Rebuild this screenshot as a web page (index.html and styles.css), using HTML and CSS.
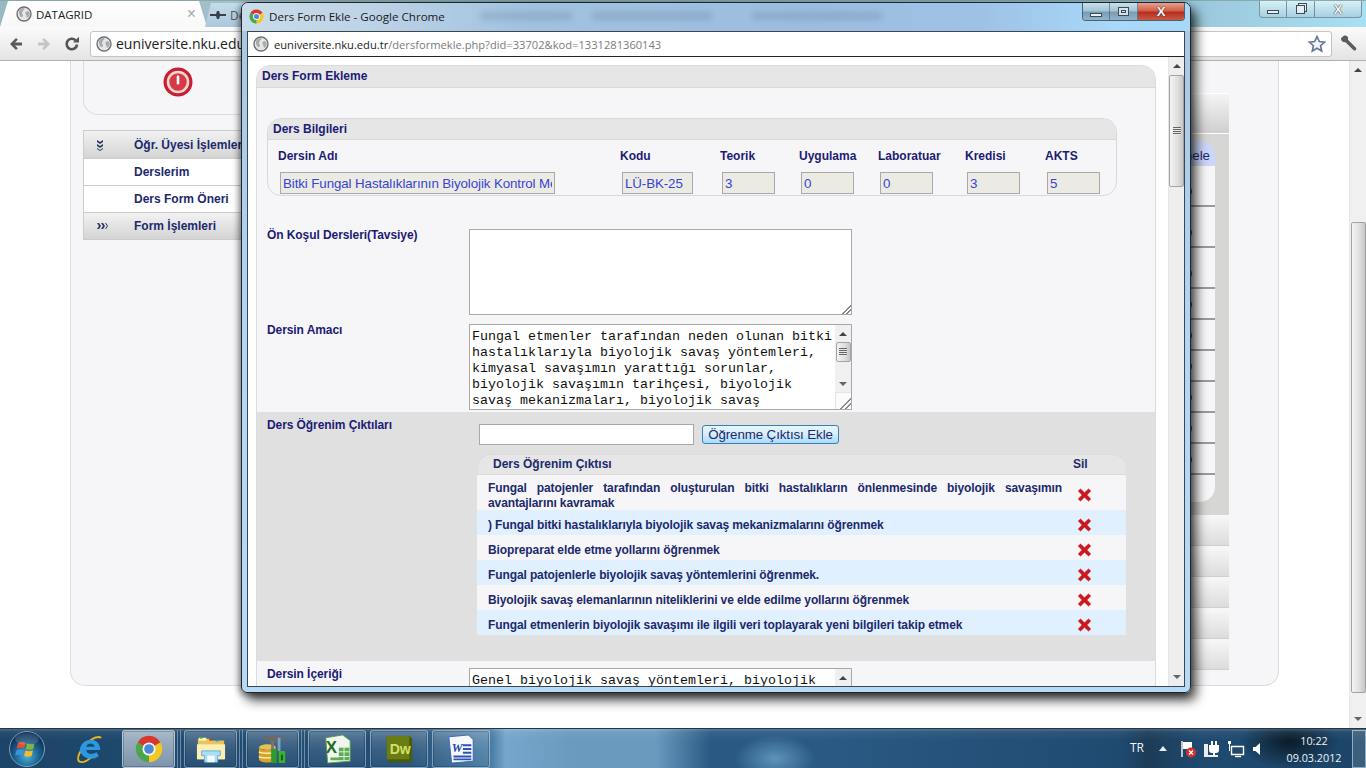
FILE: index.html
```html
<!DOCTYPE html>
<html lang="tr">
<head>
<meta charset="utf-8">
<title>Ders Form Ekle</title>
<link rel="stylesheet" href="styles.css">
</head>
<body>
<svg class="defs" width="0" height="0" aria-hidden="true">
  <defs>
    <symbol id="globe" viewBox="0 0 16 16">
      <circle cx="8" cy="8" r="7" fill="#e4e6e8" stroke="#6e7072" stroke-width="1.4"/>
      <path d="M3 5c1-2 3-3 5-3 1 1 0 2-1 2.500 0 1-1 1.500-1 2.500s1 1.500 1 2.500-1 2-2 1.500C3.500 10 2.500 7 3 5zM9.500 6c1.500-1 3-1 4 0 .5 2 0 4-1.500 5.500-1 .5-1.500-.5-1.500-1.500S9 8 9.500 6z" fill="#a8aaac"/>
    </symbol>
    <symbol id="chrome" viewBox="0 0 32 32">
      <path d="M16 16 3 8.500A15 15 0 0 1 29 8.500z" fill="#d8382c"/>
      <path d="M16 16 29 8.500A15 15 0 0 1 16 31z" fill="#f6c91e"/>
      <path d="M16 16 16 31A15 15 0 0 1 3 8.500z" fill="#4ba64a"/>
      <circle cx="16" cy="16" r="7.500" fill="#f4f4f4"/>
      <circle cx="16" cy="16" r="5.500" fill="#4a8ad8"/>
    </symbol>
    <symbol id="xmark" viewBox="0 0 15 14">
      <path d="M1 3 3.500 .8 7.500 4.500 11.500 .8 14 3 10.200 7 14 11 11.500 13.300 7.500 9.500 3.500 13.300 1 11 4.800 7z" fill="#c9191c" stroke="#e86060" stroke-width=".5"/>
    </symbol>
  </defs>
</svg>

<header class="chrome">
  <div class="tabstrip">
    <div class="tab tab-active">
      <svg class="ico16"><use href="#globe"/></svg>
      <span class="tab-title">DATAGRID</span>
      <span class="tab-close">×</span>
    </div>
    <div class="tab tab-idle">
      <svg class="ico-plane" viewBox="0 0 16 10"><path d="M0 4h6l1-3h2l1 3h6v2h-6l-1 3H7L6 6H0z" fill="#3a4048"/></svg>
      <span class="tab-title tab-title-dim">De</span>
    </div>
    <div class="winbtns winbtns-outer">
      <span class="wb wb-min"><i class="g-min"></i></span>
      <span class="wb wb-max"><i class="g-restore"></i></span>
      <span class="wb wb-close-light"><b class="g-x">X</b></span>
    </div>
  </div>
  <div class="toolbar">
    <svg class="nav" viewBox="0 0 16 16"><path d="M8 2 2 8l6 6 1.800-1.800L7 9.500h7v-3H7l2.800-2.700z" fill="#5a5a5a"/></svg>
    <svg class="nav" viewBox="0 0 16 16"><path d="M8 2l6 6-6 6-1.800-1.800L9 9.500H2v-3h7L6.200 3.800z" fill="#c4c4c4"/></svg>
    <svg class="nav" viewBox="0 0 16 16"><path d="M13 8.500A5.200 5.200 0 1 1 11.500 4.300" fill="none" stroke="#555" stroke-width="2.600"/><path d="M9 6.500h6V.8z" fill="#555"/></svg>
    <div class="omnibox">
      <svg class="ico16"><use href="#globe"/></svg>
      <span class="omni-text">euniversite.nku.edu</span>
      <svg class="star" viewBox="0 0 18 18"><path d="M9 1.500l2.300 5 5.300.6-4 3.600 1.100 5.400L9 13.300l-4.700 2.800 1.100-5.400-4-3.600 5.300-.6z" fill="#f4f6fa" stroke="#67789a" stroke-width="1.700"/></svg>
    </div>
    <svg class="wrench" viewBox="0 0 18 18"><path d="M1 3.500 4 .8c2-.6 4 .3 4.500 2.200.2.800.1 1.400-.1 2l8.300 8.300c.8.900.8 1.900 0 2.600s-1.800.8-2.600 0L5.800 7.600C3.500 8 1 6.500 1 3.500z" fill="#5c5c5c"/></svg>
  </div>
</header>

<div class="viewport">
  <main class="bgpage">
    <div class="bgpanel">
      <div class="bg-left">
        <div class="logout-box">
          <svg class="power" viewBox="0 0 30 30"><circle cx="15" cy="15" r="14.500" fill="#c4202e"/><circle cx="15" cy="15" r="10" fill="#d63a44" stroke="#f6d4d6" stroke-width="2.600"/><rect x="13.700" y="8.500" width="2.600" height="9" rx="1" fill="#fff"/></svg>
        </div>
        <nav class="menu">
          <div class="menu-row menu-head menu-first">
            <svg class="chev" viewBox="0 0 8 12"><path d="M1 1l3 2 3-2v2L4 5 1 3zM1 5l3 2 3-2v2L4 9 1 7zM1 9l3 2 3-2v1l-3 2-3-2z" fill="#28355e"/></svg>
            <span>Öğr. Üyesi İşlemleri</span>
          </div>
          <div class="menu-row"><span class="menu-nochev">Derslerim</span></div>
          <div class="menu-row"><span class="menu-nochev">Ders Form Öneri</span></div>
          <div class="menu-row menu-head menu-end">
            <svg class="chev chev-r" viewBox="0 0 12 8"><path d="M1 1l2 3-2 3h2l2-3-2-3zM5 1l2 3-2 3h2l2-3-2-3zM9 1l2 3-2 3h1l2-3-2-3z" fill="#28355e"/></svg>
            <span>Form İşlemleri</span>
          </div>
        </nav>
      </div>
      <div class="bg-right">
        <div class="bg-strip">
          <div class="bg-strip-head"></div>
          <div class="bg-table">
            <div class="bg-th">Müdahele</div>
            <div class="bg-tr bg-tall"><i class="dot"></i></div>
            <div class="bg-tr bg-tall"><i class="dot"></i></div>
            <div class="bg-tr bg-tall"><i class="dot"></i></div>
            <div class="bg-tr"><i class="dot"></i></div>
            <div class="bg-tr"><i class="dot"></i></div>
            <div class="bg-tr"><i class="dot"></i></div>
            <div class="bg-tr"><i class="dot"></i></div>
            <div class="bg-tr"><i class="dot"></i></div>
            <div class="bg-tr"><i class="dot"></i></div>
            <div class="bg-tr bg-last"></div>
          </div>
        </div>
        <div class="bg-btn"></div>
        <div class="bg-btn"></div>
        <div class="bg-btn"></div>
        <div class="bg-btn"></div>
        <div class="bg-btn"></div>
      </div>
    </div>
  </main>
  <div class="vbar page-bar">
    <span class="arrow arrow-up"></span>
    <span class="thumb page-thumb"></span>
    <span class="arrow arrow-down"></span>
  </div>
</div>

<footer class="taskbar">
  <svg class="orb" viewBox="0 0 36 36">
    <defs>
      <radialGradient id="orbfill" cx="50%" cy="70%" r="62%"><stop offset="0" stop-color="#46b4d8"/><stop offset=".6" stop-color="#1a5c8c"/><stop offset="1" stop-color="#0c2c50"/></radialGradient>
    </defs>
    <circle cx="18" cy="18" r="17.500" fill="url(#orbfill)" stroke="#7ea0bc"/>
    <path d="M9 12c3-1.500 5-1 7.500 0l-1.300 5.500c-2.500-1-4.700-1-7.500 0z" fill="#e4502c"/>
    <path d="M18 12.500c2.500 1 5 1.300 7.500 0l-1.300 5.500c-2.500 1-5 1-7.500 0z" fill="#80b83c"/>
    <path d="M7.500 19c2.800-1 5-1 7.300 0l-1.300 5.500c-2.500-1-4.700-1-7.300 0z" fill="#3a92d8"/>
    <path d="M16.400 19.500c2.500 1 5 1 7.500 0l-1.300 5.500c-2.500 1-5 1-7.500 0z" fill="#f4bc2c"/>
    <ellipse cx="18" cy="8" rx="12" ry="6" fill="#fff" opacity=".14"/>
  </svg>
  <div class="tb-ie">
    <svg class="ie" viewBox="0 0 32 32">
      <path d="M28 4C22 1 12 8 5 20c-3 6-2 10 2 10 3 0 7-2 10-5" fill="none" stroke="#e8b420" stroke-width="2"/>
      <path d="M5 17C6 10 11 6 17 6c6 0 10 5 10 11H12c.5 4 5 6 11 2.500l2.500 4C21 28 8 28 5 17zM12 13.500h9C20 9 13 9 12 13.500z" fill="#2c98e0"/>
    </svg>
  </div>
  <div class="tb-btn tb-active tb-w53">
    <svg class="tb-ico tb-ico28"><use href="#chrome"/></svg>
  </div>
  <i class="tb-sep"></i>
  <div class="tb-btn tb-w53">
    <svg class="tb-ico" viewBox="0 0 32 32">
      <path d="M2 5h12l2 2h14v20H2z" fill="#e8c45a"/>
      <path d="M3 4h8v3H3z" fill="#fff6c8"/>
      <rect x="4" y="3" width="3" height="2" fill="#38b838"/><rect x="14" y="5" width="3" height="2" fill="#d83828"/><rect x="21" y="6" width="3" height="2" fill="#3888d8"/>
      <path d="M1 11h30v16H1z" fill="#fbefb4"/>
      <path d="M6 18h20v5h-3v7H9v-7H6z" fill="#a8def8" stroke="#64b0dc"/>
      <rect x="12" y="23" width="8" height="7" fill="#f2f8fc"/>
    </svg>
  </div>
  <i class="tb-sep"></i>
  <div class="tb-btn tb-w53">
    <svg class="tb-ico" viewBox="0 0 32 32">
      <ellipse cx="10" cy="14" rx="9" ry="3" fill="#e8c050"/>
      <path d="M1 14v13c0 2 4 3.500 9 3.500s9-1.500 9-3.500V14c-1 2-4 3-9 3s-8-1-9-3z" fill="#d8a428"/>
      <path d="M1 19c2 2 16 2 18 0M1 24c2 2 16 2 18 0" stroke="#fff2b4" stroke-width="1.400" fill="none"/>
      <path d="M6 2h16c4 0 7 3 8 7l-3-3h-6v3h-9V6H6z" fill="#6a6a6a"/>
      <rect x="14" y="8" width="3" height="8" fill="#777"/>
      <rect x="21" y="4" width="3" height="14" fill="#78a0d0"/>
      <rect x="14" y="16" width="6" height="15" rx="1" fill="#2c9c30"/>
      <rect x="22" y="18" width="7" height="13" rx="1" fill="#38b030"/>
      <rect x="24.500" y="22" width="2" height="6" fill="#0c5c14"/>
    </svg>
  </div>
  <i class="tb-sep"></i>
  <div class="tb-btn tb-w58">
    <svg class="tb-ico tb-ico30" viewBox="0 0 32 32">
      <path d="M4 4 22 1l8 6v22L6 31z" fill="#f0f6ec" stroke="#5c9a52"/>
      <path d="M18 14h11v14H9v-3h9z" fill="#5eab58"/>
      <path d="M18 14h11M18 19h11M18 24h11M23.500 14v14" stroke="#e8f4e4"/>
      <text class="xl" x="4" y="20">X</text>
    </svg>
  </div>
  <div class="tb-btn tb-w58 tb-gap">
    <svg class="tb-ico tb-ico30" viewBox="0 0 32 32">
      <path d="M3 2h24l3 3v25H6l-3-3z" fill="#4a5a0c"/>
      <path d="M3 2h24v25H3z" fill="#6a7c14"/>
      <text class="dw" x="6" y="21">Dw</text>
    </svg>
  </div>
  <div class="tb-btn tb-w58 tb-gap">
    <svg class="tb-ico tb-ico30" viewBox="0 0 32 32">
      <path d="M3 3 24 1l5 5v23L6 31z" fill="#f6f8fc" stroke="#3c64b8"/>
      <path d="M18 12h9M18 16h9M18 20h9M8 24h19M8 27h19" stroke="#2c54b0" stroke-width="2"/>
      <text class="wd" x="6" y="19">W</text>
    </svg>
  </div>
  <div class="tray">
    <span class="tray-lang">TR</span>
    <svg class="tray-arrow" viewBox="0 0 8 5"><path d="M0 5l4-5 4 5z" fill="#e8eef4"/></svg>
    <svg class="tray-ico" viewBox="0 0 18 18"><path d="M3 1v16" stroke="#fff" stroke-width="1.400"/><path d="M4 2h9v7H4z" fill="#fff"/><circle cx="12" cy="12.500" r="5" fill="#d8302c"/><path d="M10 10.500l4 4M14 10.500l-4 4" stroke="#fff" stroke-width="1.400"/></svg>
    <svg class="tray-ico" viewBox="0 0 18 18"><path d="M1 4h4v11h10v2H1z" fill="#fff" opacity=".9"/><path d="M8 1h2v4h2V1h2v4h2v5a3 3 0 0 1-3 3h-1v3h-2v-3H9a3 3 0 0 1-3-3V5h2z" fill="#fff"/></svg>
    <svg class="tray-ico" viewBox="0 0 18 18"><path d="M1 1h3v3H1z" fill="#fff"/><path d="M2.500 4v7" stroke="#fff"/><path d="M4.500 6.500h12v8h-12z" fill="none" stroke="#fff" stroke-width="1.400"/><path d="M8 16.500h6" stroke="#fff" stroke-width="1.400"/></svg>
    <svg class="tray-ico tray-speaker" viewBox="0 0 18 18"><path d="M2 7h2.500L9 3v12l-4.500-4H2z" fill="#fff"/></svg>
    <div class="clock"><span>10:22</span><span>09.03.2012</span></div>
    <i class="show-desktop"></i>
  </div>
</footer>

<section class="popup">
  <div class="titlebar">
    <i class="smudge smudge-a"></i><i class="smudge smudge-b"></i><i class="smudge smudge-c"></i>
    <svg class="ico-chrome"><use href="#chrome"/></svg>
    <span class="win-title">Ders Form Ekle - Google Chrome</span>
    <div class="winbtns">
      <span class="wb wb-min wb-glass"><i class="g-min"></i></span>
      <span class="wb wb-max wb-glass"><i class="g-max"></i></span>
      <span class="wb wb-close"><b class="g-x">X</b></span>
    </div>
  </div>
  <div class="win-body">
    <div class="addr">
      <svg class="ico16"><use href="#globe"/></svg>
      <span class="addr-text">euniversite.nku.edu.tr<span class="addr-dim">/dersformekle.php?did=33702&amp;kod=1331281360143</span></span>
    </div>
    <div class="win-content">
      <div class="doc">
        <div class="panel">
          <h1 class="panel-title">Ders Form Ekleme</h1>
          <div class="info-box">
            <h2 class="info-title">Ders Bilgileri</h2>
            <div class="info-grid">
              <span class="th">Dersin Adı</span><span class="th">Kodu</span><span class="th">Teorik</span><span class="th">Uygulama</span><span class="th">Laboratuar</span><span class="th">Kredisi</span><span class="th">AKTS</span>
              <input class="ro ro-name" readonly value="Bitki Fungal Hastalıklarının Biyolojik Kontrol Metotları">
              <input class="ro ro-code" readonly value="LÜ-BK-25">
              <input class="ro" readonly value="3">
              <input class="ro" readonly value="0">
              <input class="ro" readonly value="0">
              <input class="ro" readonly value="3">
              <input class="ro" readonly value="5">
            </div>
          </div>

          <div class="form-row row-first">
            <label class="lbl">Ön Koşul Dersleri(Tavsiye)</label>
            <div class="ta-wrap">
              <textarea class="ta" readonly></textarea>
              <i class="grip"></i>
            </div>
          </div>

          <div class="form-row row-second">
            <label class="lbl">Dersin Amacı</label>
            <div class="ta-wrap">
              <textarea class="ta" readonly>Fungal etmenler tarafından neden olunan bitki
hastalıklarıyla biyolojik savaş yöntemleri,
kimyasal savaşımın yarattığı sorunlar,
biyolojik savaşımın tarihçesi, biyolojik
savaş mekanizmaları, biyolojik savaş</textarea>
              <div class="ta-bar">
                <span class="arrow arrow-up arrow-sm"></span>
                <span class="thumb ta-thumb"></span>
                <span class="arrow arrow-down arrow-sm"></span>
              </div>
              <i class="grip grip-box"></i>
            </div>
          </div>

          <div class="out-row">
            <label class="lbl lbl-out">Ders Öğrenim Çıktıları</label>
            <div class="out-main">
              <div class="out-add">
                <input class="out-input">
                <button class="out-btn" type="button">Öğrenme Çıktısı Ekle</button>
              </div>
              <div class="out-table">
                <div class="out-head"><span class="out-h1">Ders Öğrenim Çıktısı</span><span>Sil</span></div>
                <div class="out-tr out-tall"><span class="out-text">Fungal patojenler tarafından oluşturulan bitki hastalıkların önlenmesinde biyolojik savaşımın avantajlarını kavramak</span><svg class="out-x"><use href="#xmark"/></svg></div>
                <div class="out-tr out-alt"><span class="out-text">) Fungal bitki hastalıklarıyla biyolojik savaş mekanizmalarını öğrenmek</span><svg class="out-x"><use href="#xmark"/></svg></div>
                <div class="out-tr"><span class="out-text">Biopreparat elde etme yollarını öğrenmek</span><svg class="out-x"><use href="#xmark"/></svg></div>
                <div class="out-tr out-alt"><span class="out-text">Fungal patojenlerle biyolojik savaş yöntemlerini öğrenmek.</span><svg class="out-x"><use href="#xmark"/></svg></div>
                <div class="out-tr"><span class="out-text">Biyolojik savaş elemanlarının niteliklerini ve elde edilme yollarını öğrenmek</span><svg class="out-x"><use href="#xmark"/></svg></div>
                <div class="out-tr out-alt"><span class="out-text">Fungal etmenlerin biyolojik savaşımı ile ilgili veri toplayarak yeni bilgileri takip etmek</span><svg class="out-x"><use href="#xmark"/></svg></div>
              </div>
            </div>
          </div>

          <div class="form-row row-third">
            <label class="lbl">Dersin İçeriği</label>
            <div class="ta-wrap">
              <textarea class="ta" readonly>Genel biyolojik savaş yöntemleri, biyolojik
savaş etmenleri</textarea>
              <div class="ta-bar">
                <span class="arrow arrow-up arrow-sm"></span>
              </div>
            </div>
          </div>
        </div>
      </div>
      <div class="vbar win-bar">
        <span class="arrow arrow-up"></span>
        <span class="thumb win-thumb"><i class="gripper"></i></span>
        <span class="arrow arrow-down"></span>
      </div>
    </div>
  </div>
</section>
</body>
</html>
```
FILE: styles.css
```css
* { box-sizing: border-box; }
html, body { margin: 0; padding: 0; }
body {
  width: 1366px; height: 768px; overflow: hidden;
  display: flex; flex-direction: column; position: relative;
  background: #fff;
  font-family: "Liberation Sans", Arial, sans-serif;
  font-size: 12px; color: #1c1c74;
}
.defs { position: absolute; }
svg { display: block; flex: none; }
.ico16 { width: 16px; height: 16px; }

/* outer browser */
.chrome { height: 61px; flex: none; display: flex; flex-direction: column; }
.tabstrip {
  height: 27px; display: flex; align-items: flex-end; position: relative;
  background: linear-gradient(90deg, #9ab8c0 0, #a4c0cc 18%, #7fa0a8 40%, #9cc8dc 88%, #a8e0f4 100%);
  border-top: 1px solid #8aa;
}
.tab { height: 26px; display: flex; align-items: center; }
.tab-active {
  width: 207px; padding: 0 11px 0 16px; gap: 4px;
  background: linear-gradient(#fff, #f8f8f8);
  clip-path: polygon(0 100%, 8px 0, 199px 0, 207px 100%);
  font-family: "Open Sans", "Noto Sans", sans-serif; font-size: 11.500px; color: #222;
}
.tab-close { margin-left: auto; color: #aaa; font: 16px "Liberation Sans", sans-serif; }
.tab-idle {
  width: 60px; margin-left: -2px; padding-left: 5px; gap: 4px; height: 24px;
  background: linear-gradient(#c4dcea, #aac8dc);
  clip-path: polygon(0 100%, 6px 0, 100% 0, 100% 100%);
}
.ico-plane { width: 16px; height: 10px; }
.tab-title { white-space: nowrap; }
.tab-title-dim { color: #556; font-family: "Open Sans", sans-serif; font-size: 12px; }

.winbtns { display: flex; height: 18px; margin-left: auto; align-self: flex-start; border: 1px solid #4d6070; border-top: 0; border-radius: 0 0 4px 4px; overflow: hidden; position: relative; }
.winbtns-outer { margin-right: 4px; height: 17px; border-color: #7d939f; background: linear-gradient(#d8f0f8, #a8d0e0); }
.wb { display: flex; align-items: center; justify-content: center; border-right: 1px solid rgba(60,80,90,.55); width: 28px; }
.wb:last-child { border-right: 0; }
.wb-min { width: 27px; }
.wb-close-light { width: 46px; }
.wb-close { width: 46px; background: linear-gradient(#e8a090 0, #d06048 45%, #b82e1c 55%, #c85a48 100%); }
.wb-glass { background: linear-gradient(#c8e0ec 0, #a4c4d8 45%, #7a9cb4 55%, #90b4cc 100%); }
.g-min { width: 12px; height: 4px; background: #e8eef2; border: 1px solid #3c4a54; margin-top: 6px; }
.g-max { width: 11px; height: 9px; border: 1px solid #3c4a54; background: #d4e2ea; position: relative; }
.g-max::after { content: ""; position: absolute; inset: 2px 2px 2px 2px; border: 1px solid #3c4a54; background: #cfe0ea; }
.g-restore { width: 9px; height: 9px; border: 1px solid #3c4a54; background: #e4eef4; box-shadow: 2px -2px 0 -1px #e4eef4, 2px -2px 0 0 #3c4a54; }
.g-x { font: bold 13px "Liberation Sans", sans-serif; color: #f4f4f4; text-shadow: 0 0 1px #333, 0 0 1px #333; line-height: 1; }

.toolbar {
  height: 34px; display: flex; align-items: center; padding: 0 8px 0 8px;
  background: linear-gradient(#fbfbfb, #e4e4e4);
  border-bottom: 1px solid #b0b0b0;
}
.nav { width: 16px; height: 16px; margin-right: 12px; }
.omnibox {
  width: 1242px; height: 26px; margin-left: -2px; display: flex; align-items: center; gap: 4px; padding: 0 5px;
  background: #fff; border: 1px solid #c4c4c4; border-radius: 3px;
  font-family: "Open Sans", "Noto Sans", sans-serif; font-size: 14px; color: #222;
}
.omni-text { white-space: nowrap; }
.star { width: 18px; height: 18px; margin-left: auto; margin-right: 0; }
.wrench { width: 17px; height: 17px; margin-left: 8px; }

/* background page */
.viewport { flex: 1; display: flex; min-height: 0; }
.bgpage { flex: 1; overflow: hidden; padding-left: 70px; }
.bgpanel {
  width: 1209px; height: 625px; display: flex; justify-content: space-between;
  background: #f6f6f8; border: 1px solid #dcdcdc; border-top: 0; border-radius: 0 0 15px 15px;
  padding: 0 49px 0 12px;
}
.bg-left { width: 400px; }
.logout-box {
  height: 54px; background: #f6f6f8; border: 1px solid #dcdcdc; border-top: 0;
  border-radius: 0 0 0 15px; padding: 6px 0 0 79px;
}
.power { width: 30px; height: 30px; }
.menu { margin-top: 15px; border: 1px solid #ccc; font-weight: bold; color: #1c2a6c; }
.menu-row { height: 27px; display: flex; align-items: center; background: #fff; border-bottom: 1px solid #ccc; padding-left: 12px; }
.menu-first { height: 28px; }
.menu-end { height: 26px; border-bottom: 0; }
.menu-head { background: linear-gradient(#f2f2f2, #d4d4d4); color: #1c2a6c; }
.chev { width: 8px; height: 12px; margin-right: 30px; }
.chev-r { width: 12px; height: 8px; margin-right: 26px; }
.menu-nochev { padding-left: 38px; }
.bg-right { width: 200px; padding-top: 32px; }
.bg-strip { background: #d6d6d4; height: 422px; padding-right: 14px; position: relative; }
.bg-strip-head { height: 41px; margin-right: -14px; background: linear-gradient(#f4f4f4, #cfcfcf); border-bottom: 1px solid #fff; border-top: 1px solid #fff; }
.bg-table { margin-top: 7px; }
.bg-th {
  height: 25px; background: #ccd6fa; border-radius: 0 15px 0 0; text-align: right; padding: 7px 5px 0 0;
  font-size: 13.300px; color: #1c2a6c;
}
.bg-tr { height: 31px; background: linear-gradient(90deg, #fff, #f6f6f8); border-bottom: 2px solid #9a9a9a; position: relative; }
.bg-tall { height: 41px; }
.bg-last { height: 27px; border-bottom: 0; border-radius: 0 0 15px 0; }
.dot { position: absolute; right: 23px; bottom: 10px; width: 5px; height: 7px; border-radius: 50%; background: #1c6ea8; }
.bg-btn { height: 27px; margin-top: 4px; background: linear-gradient(#f4f4f4, #dcdcdc); border-bottom: 1px solid #cfcfcf; }

/* scrollbars */
.vbar { width: 17px; flex: none; display: flex; flex-direction: column; align-items: center; background: #f0f0f0; border-left: 1px solid #e6e6e6; }
.arrow { display: flex; justify-content: center; align-items: center; width: 100%; height: 18px; flex: none; }
.arrow::before { content: ""; border-left: 4px solid transparent; border-right: 4px solid transparent; }
.arrow-up::before { border-bottom: 4px solid #444; }
.arrow-down { margin-top: auto; }
.arrow-down::before { border-top: 4px solid #666; }
.thumb { display: block; width: 15px; background: linear-gradient(90deg, #f4f4f4, #dedede 60%, #c6c6c6); border: 1px solid #a4a4a4; border-radius: 2px; flex: none; position: relative; }
.page-thumb { margin-top: 143px; height: 471px; }
.win-bar { width: 16px; background: #eeeeee; }
.win-thumb { height: 112px; width: 15px; display: flex; align-items: center; justify-content: center; }
.gripper, .ta-thumb::after { display: block; width: 8px; height: 8px; background: repeating-linear-gradient(#666 0 1px, #e8e8e8 1px 2px); }

/* taskbar */
.taskbar {
  height: 40px; flex: none; display: flex; align-items: stretch; padding-left: 9px; position: relative;
  border-top: 1px solid #26343e;
  background:
    linear-gradient(rgba(255,255,255,.2) 0, rgba(255,255,255,.05) 3px, rgba(255,255,255,0) 12px),
    radial-gradient(40px 24px at 775px 30px, #5e93ba 0, rgba(94,147,186,0) 100%),
    radial-gradient(50px 28px at 1290px 12px, #0a1c28 0, rgba(10,28,40,0) 100%),
    linear-gradient(90deg, #1c4468 0, #245078 30%, #4a7ea6 36%, #77a6cc 37%, #6a9abe 42%, #6a9abe 48%, #2a5a84 52%, #2a5a84 60%, #234e76 75%, #1f4a70 82%, #1c3c58 84%, #1f4a70 88%, #1c4468 100%);
}
.orb { width: 36px; height: 36px; margin: 2px 0 0 0; }
.tb-ie { width: 77px; display: flex; align-items: center; justify-content: center; padding-left: 13px; }
.ie { width: 30px; height: 30px; }
.tb-btn {
  height: 38px; margin-top: 1px; display: flex; align-items: center; justify-content: center;
  border: 1px solid rgba(220,235,245,.42); border-radius: 3px;
  background: linear-gradient(rgba(255,255,255,.24), rgba(255,255,255,.1) 50%, rgba(255,255,255,.03));
  box-shadow: inset 0 0 0 1px rgba(10,30,50,.25);
}
.tb-active { background: linear-gradient(rgba(255,255,255,.6), rgba(255,255,255,.42)); }
.tb-w53 { width: 53px; }
.tb-w58 { width: 58px; }
.tb-gap { margin-left: 4px; }
.tb-sep { width: 9px; margin-top: 1px; height: 38px; background: linear-gradient(90deg, transparent 2px, rgba(220,235,245,.4) 2px 3px, transparent 3px 5px, rgba(220,235,245,.4) 5px 6px, transparent 6px); }
.tb-ico { width: 30px; height: 30px; }
.tb-ico28 { width: 28px; height: 28px; }
.tb-ico30 { width: 30px; height: 30px; }
.xl { font: bold 18px "Liberation Sans", sans-serif; fill: #27682a; }
.dw { font: bold 15px "Liberation Sans", sans-serif; fill: #d4e060; }
.wd { font: italic bold 13px "Liberation Serif", serif; fill: #1c48a8; }
.tray { margin-left: auto; display: flex; align-items: center; color: #eef4f8; font-family: "Open Sans", "Noto Sans", sans-serif; font-size: 12px; }
.tray-lang { margin-right: 15px; margin-top: -3px; }
.tray-arrow { width: 8px; height: 5px; margin-right: 12px; }
.tray-ico { width: 18px; height: 18px; margin-right: 6px; }
.tray-speaker { margin-right: 9px; }
.clock { width: 72px; display: flex; flex-direction: column; align-items: center; line-height: 17px; margin-right: 2px; font-size: 10.800px; }
.show-desktop { width: 14px; height: 38px; border: 1px solid rgba(220,235,245,.55); background: rgba(255,255,255,.15); margin-top: 0; }

/* popup window */
.popup {
  position: absolute; left: 241px; top: 2px; width: 950px; height: 691px;
  display: flex; flex-direction: column;
  border: 1px solid #1c2630; border-radius: 7px 7px 6px 6px;
  padding: 0 5px 5px;
  background: linear-gradient(#b7d0e6 0, #a9c8e4 5%, #b4d6f2 50%, #b7daf6 100%);
  box-shadow: 5px 7px 12px rgba(0,0,0,.75), -2px 2px 6px rgba(0,0,0,.4);
}
.titlebar {
  height: 28px; flex: none; display: flex; align-items: center; position: relative; margin: 0 -5px; padding: 0 5px 0 7px;
  border-radius: 6px 6px 0 0; overflow: hidden;
  background: linear-gradient(90deg, #cadcea 0, #bcd2e6 14%, #a2c2e0 30%, #9dbde0 60%, #9ec2e6 78%, #a8d8fa 92%, #a8d8f6 100%);
}
.smudge { position: absolute; top: 9px; height: 8px; background: #56728e; opacity: .25; filter: blur(3px); }
.smudge-a { left: 239px; width: 91px; }
.smudge-b { left: 350px; width: 120px; }
.smudge-c { left: 510px; width: 130px; }
.ico-chrome { width: 15px; height: 15px; position: relative; margin-top: -2px; }
.win-title { margin: -2px 0 0 5px; position: relative; font-family: "Open Sans", "Noto Sans", sans-serif; font-size: 11.600px; color: #1a1a1a; white-space: nowrap; }
.win-body { flex: 1; min-height: 0; display: flex; flex-direction: column; border: 1px solid #3a4650; background: #fff; }
.addr { height: 25px; flex: none; display: flex; align-items: center; padding-left: 5px; gap: 5px; border-bottom: 1px solid #1c2630; font-family: "Open Sans", "Noto Sans", sans-serif; font-size: 11.150px; color: #222; }
.addr-dim { color: #7b7b7b; }
.win-content { flex: 1; min-height: 0; display: flex; }
.doc { flex: 1; overflow: hidden; padding: 8px 0 0 8px; }

/* form */
.panel { width: 900px; height: 1000px; background: #f6f6f8; border: 1px solid #dcdcdc; border-radius: 14px 14px 0 0; }
.panel-title { margin: 0; height: 22px; line-height: 20px; padding-left: 5px; font-size: 12px; background: #e6e6e6; border-bottom: 1px solid #d8d8d8; border-radius: 13px 13px 0 0; }
.info-box { width: 850px; height: 78px; margin: 30px 0 0 10px; border: 1px solid #d8d8d8; border-radius: 14px; }
.info-title { margin: 0; height: 21px; line-height: 20px; padding-left: 5px; font-size: 12px; background: #e6e6e6; border-bottom: 1px solid #d8d8d8; border-radius: 13px 13px 0 0; }
.info-grid {
  display: grid; padding: 0 0 0 10px;
  grid-template-columns: 342px 100px 79px 79px 87px 80px 80px;
  grid-template-rows: 32px 22px;
}
.th { font-weight: bold; align-self: center; margin-top: -1px; }
.ro {
  width: 53px; height: 22px; margin: 0 0 0 2px; padding: 0 2px;
  font: 13.330px "Liberation Sans", sans-serif; color: #3744d6; letter-spacing: -.1px;
  background: #ebebe4; border: 1px solid #a9a9a9; border-radius: 0; outline: 0;
}
.ro-name { width: 275px; }
.ro-code { width: 71px; }
.form-row { display: grid; grid-template-columns: 202px 383px; padding-left: 10px; }
.row-first { margin-top: 33px; }
.row-second { margin-top: 9px; }
.row-third { padding-top: 7px; }
.lbl { font-weight: bold; padding-top: 0; line-height: 12px; letter-spacing: -.08px; }
.row-third .lbl { padding-top: 0; }
.ta-wrap { position: relative; height: 86px; }
.ta {
  display: block; width: 383px; height: 86px; margin: 0; padding: 4px 2px 0; resize: none; overflow: hidden; outline: 0;
  font: 13.330px/16px "Liberation Mono", monospace; color: #111; background: #fff;
  border: 1px solid #a9a9a9; border-radius: 0; white-space: pre;
}
.ta-bar { position: absolute; top: 1px; right: 1px; width: 16px; height: 67px; background: #f0f0f0; display: flex; flex-direction: column; align-items: center; }
.arrow-sm { height: 17px; }
.ta-thumb { height: 20px; width: 15px; display: flex; align-items: center; justify-content: center; }
.ta-thumb::after { content: ""; }
.grip { position: absolute; right: 1px; bottom: 1px; width: 12px; height: 12px; background: linear-gradient(135deg, transparent 62%, #888 62% 68%, transparent 68% 78%, #888 78% 84%, transparent 84%); }
.grip-box { width: 16px; height: 17px; background-color: #fbfbfb; border-left: 1px solid #e4e4e4; border-top: 1px solid #e4e4e4; }

.out-row { margin-top: 2px; display: grid; grid-template-columns: 210px 649px; background: #e0e0e0; padding: 6px 0 26px 10px; }
.lbl-out { padding-top: 1px; }
.out-main { padding-top: 6px; }
.out-add { display: flex; align-items: flex-start; padding-left: 2px; }
.out-input { width: 215px; height: 21px; margin: 0; padding: 0 2px; border: 1px solid #a9a9a9; background: #fff; border-radius: 0; outline: 0; }
.out-btn {
  width: 137px; height: 19px; margin: 1px 0 0 8px; padding: 0; cursor: pointer;
  font: 13.330px "Liberation Sans", sans-serif; color: #1c2a6c; white-space: nowrap; letter-spacing: -.1px;
  background: linear-gradient(#e8f5fc 0, #d8eefa 45%, #a8dafa 100%);
  border: 1px solid #3c7fb1; border-radius: 3px;
}
.out-table { margin-top: 9px; font-weight: bold; }
.out-head { height: 21px; display: flex; align-items: center; padding-bottom: 1px; background: #e6e6e6; border: 1px solid #dcdcdc; border-width: 1px 0 1px 1px; border-radius: 14px 14px 0 0; padding-right: 38px; color: #1c2a6c; }
.out-h1 { padding-left: 15px; width: 595px; }
.out-tr { height: 25px; display: flex; align-items: center; background: #f6f6f8; padding: 5px 0 0 11px; color: #1c2a6c; }
.out-tall { height: 35px; }
.out-tall .out-text { margin-top: 2px; }
.out-alt { background: #e0f0ff; }
.out-text { width: 574px; line-height: 15px; text-align: justify; letter-spacing: -.11px; }
.out-x { width: 15px; height: 14px; margin-left: 15px; }
```
